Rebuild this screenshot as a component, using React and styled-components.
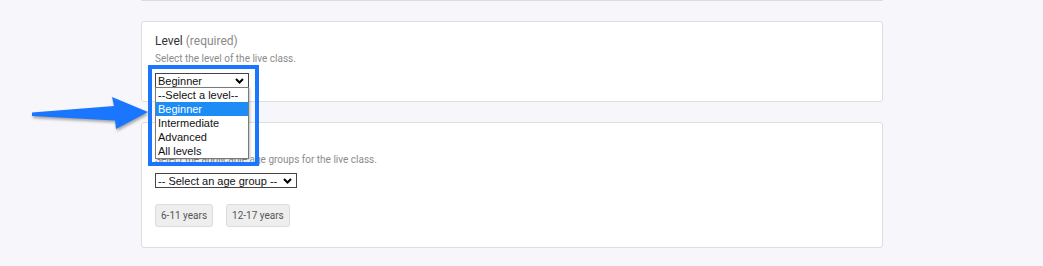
import React from 'react';
import styled, { createGlobalStyle } from 'styled-components';

const GlobalStyle = createGlobalStyle`
  html, body {
    margin: 0;
    padding: 0;
    background: #f7f7fb;
    font-family: Roboto, "Liberation Sans", Arial, sans-serif;
  }
`;

const Page = styled.div`
  position: relative;
  width: 1043px;
  height: 266px;
  overflow: hidden;
  background: #f7f7fb;
`;

const Column = styled.div`
  width: 742px;
  margin-left: 141px;
  display: flex;
  flex-direction: column;
  gap: 20px;
`;

const PrevCardEdge = styled.div`
  height: 1px;
  background: #dcdcdc;
`;

const Card = styled.section`
  background: #fff;
  border: 1px solid #dedede;
  border-radius: 3px;
  padding: ${p => p.$pad || '12px 13px 13px'};
`;

const Label = styled.div`
  font-size: 12px;
  line-height: 14px;
  color: #333;

  span {
    color: #8a8a8a;
  }
`;

const Help = styled.div`
  margin-top: 4px;
  font-size: 10px;
  line-height: 13px;
  color: #8c8c8c;
`;

const SelectWrap = styled.div`
  position: relative;
  margin-top: ${p => p.$mt || '8px'};
  width: ${p => p.$w}px;
`;

const SelectBox = styled.div`
  box-sizing: border-box;
  height: 15px;
  border: 1px solid #444;
  background: #fff;
  display: flex;
  align-items: center;
  justify-content: space-between;
  padding: 0 4px 0 2px;
  font-family: "Liberation Sans", Arial, sans-serif;
  font-size: 11px;
  color: #111;
`;

const Chevron = () => (
  <svg width="9" height="6" viewBox="0 0 9 6">
    <path d="M1 1 L4.5 4.5 L8 1" fill="none" stroke="#000" strokeWidth="2" />
  </svg>
);

const OptionList = styled.ul`
  position: absolute;
  left: 0;
  top: 14px;
  width: 100%;
  box-sizing: border-box;
  margin: 0;
  padding: 0;
  list-style: none;
  background: #fff;
  border: 1px solid #7a7a7a;
  box-shadow: 1px 1px 2px rgba(0, 0, 0, 0.25);
  z-index: 5;
`;

const Option = styled.li`
  height: 14px;
  line-height: 14px;
  padding: 0 2px;
  font-family: "Liberation Sans", Arial, sans-serif;
  font-size: 11px;
  color: ${p => (p.$active ? '#fff' : '#111')};
  background: ${p => (p.$active ? '#1e8cf5' : 'transparent')};
`;

const Highlight = styled.div`
  position: absolute;
  left: 148px;
  top: 65px;
  width: 111px;
  height: 101px;
  box-sizing: border-box;
  border: 4px solid #1a75ff;
  z-index: 6;
  pointer-events: none;
`;

const Pointer = styled.svg`
  position: absolute;
  left: 0;
  top: 90px;
  z-index: 4;
  overflow: visible;
  filter: drop-shadow(1px 2px 1.5px rgba(0, 0, 0, 0.35));
`;

const Chips = styled.div`
  display: flex;
  gap: 13px;
  margin-top: 16px;
`;

const Chip = styled.button`
  height: 23px;
  padding: 0 5px;
  border: 1px solid #dcdcdc;
  border-radius: 3px;
  background: #eeeeee;
  color: #555;
  font-family: Roboto, "Liberation Sans", Arial, sans-serif;
  font-size: 10px;
`;

const levels = ['--Select a level--', 'Beginner', 'Intermediate', 'Advanced', 'All levels'];

export default function App() {
  return (
    <Page>
      <GlobalStyle />
      <Column>
        <PrevCardEdge />

        <Card>
          <Label>Level <span>(required)</span></Label>
          <Help>Select the level of the live class.</Help>
          <SelectWrap $w={94}>
            <SelectBox>
              Beginner
              <Chevron />
            </SelectBox>
            <OptionList>
              {levels.map(l => (
                <Option key={l} $active={l === 'Beginner'}>{l}</Option>
              ))}
            </OptionList>
          </SelectWrap>
        </Card>

        <Card $pad="12px 13px 20px">
          <Label>Age group</Label>
          <Help>Select the applicable age groups for the live class.</Help>
          <SelectWrap $w={142} $mt="7px">
            <SelectBox>
              -- Select an age group --
              <Chevron />
            </SelectBox>
          </SelectWrap>
          <Chips>
            <Chip>6-11 years</Chip>
            <Chip>12-17 years</Chip>
          </Chips>
        </Card>
      </Column>

      <Highlight />

      <Pointer width="150" height="45" viewBox="0 90 150 45">
        <polygon
          points="32,112.5 114,106 112,97 148,112 116,129 115,120.5 32,116"
          fill="#1a75ff"
        />
      </Pointer>
    </Page>
  );
}
